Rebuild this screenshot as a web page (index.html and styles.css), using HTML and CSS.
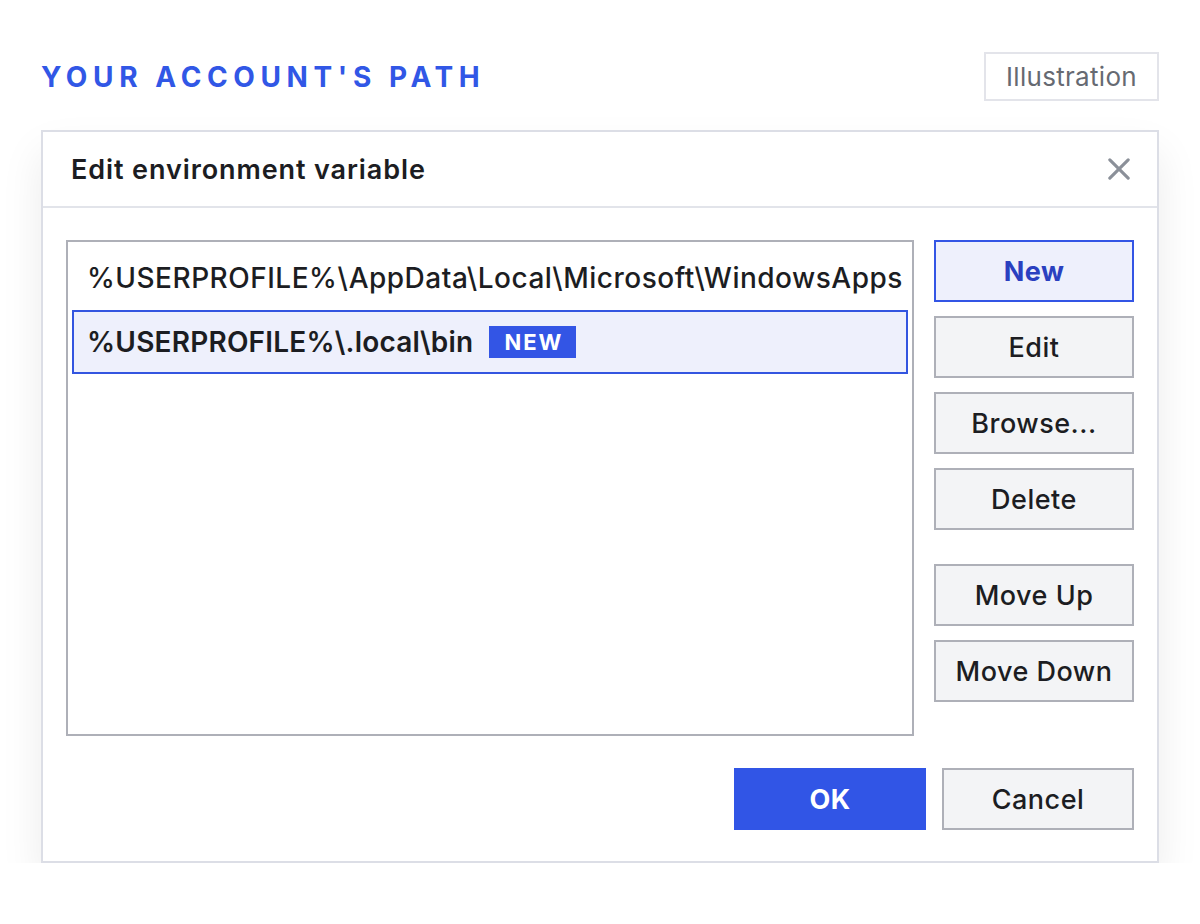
FILE: index.html
```html
<!DOCTYPE html>
<html lang="en">
<head>
    <meta charset="UTF-8">
    <title>Your account's path</title>
    <link rel="stylesheet" href="styles.css">
</head>
<body>
    <main class="page">
        <div class="topline">
            <h2 class="eyebrow">YOUR ACCOUNT'S PATH</h2>
            <span class="tag">Illustration</span>
        </div>

        <div class="dialog">
            <div class="dialogHead">
                <span class="dialogTitle">Edit environment variable</span>
                <svg class="close" width="24" height="24" viewBox="0 0 24 24">
                    <path d="M2 2 L22 22 M22 2 L2 22" stroke="#8b9099" stroke-width="3.4" stroke-linecap="round"/>
                </svg>
            </div>

            <div class="dialogBody">
                <div class="list">
                    <div class="item">%USERPROFILE%\AppData\Local\Microsoft\WindowsApps</div>
                    <div class="item selected">%USERPROFILE%\.local\bin <span class="badge">NEW</span></div>
                </div>
                <div class="sideButtons">
                    <button class="btn primarySoft">New</button>
                    <button class="btn">Edit</button>
                    <button class="btn">Browse...</button>
                    <button class="btn">Delete</button>
                    <button class="btn spaced">Move Up</button>
                    <button class="btn">Move Down</button>
                </div>
            </div>

            <div class="dialogFoot">
                <button class="btn ok">OK</button>
                <button class="btn cancel">Cancel</button>
            </div>
        </div>
    </main>
</body>
</html>
```

FILE: styles.css
```css
*{
    margin: 0;
    box-sizing: border-box;
}
body{
    background-color: #fff;
    font-family: Inter, "Noto Sans", sans-serif;
    color: #1c1d22;
}
.page{
    padding: 52px 41px 0 41px;
}
.topline{
    display: flex;
    justify-content: space-between;
    align-items: center;
    height: 49px;
    margin-bottom: 29px;
}
.eyebrow{
    color: #3157e6;
    font-size: 28px;
    font-weight: 700;
    letter-spacing: 5.6px;
}
.tag{
    border: 2px solid #e3e4ea;
    height: 49px;
    width: 175px;
    display: flex;
    align-items: center;
    justify-content: center;
    font-size: 26px;
    letter-spacing: 0.3px;
    color: #666a72;
}
.dialog{
    border: 2px solid #dcdee6;
    background-color: #fff;
    box-shadow: 0 22px 40px rgba(0, 0, 0, 0.08);
}
.dialogHead{
    height: 76px;
    border-bottom: 2px solid #e2e4ea;
    display: flex;
    align-items: center;
    justify-content: space-between;
    padding: 0 27px 0 28px;
}
.dialogTitle{
    font-size: 27px;
    font-weight: 600;
    letter-spacing: 0.9px;
}
.close{
    display: block;
    width: 22px;
    height: 22px;
}
.dialogBody{
    display: flex;
    gap: 20px;
    padding: 32px 23px 0 23px;
}
.list{
    width: 848px;
    height: 496px;
    border: 2px solid #aeb0b8;
    padding: 4px 4px;
}
.item{
    height: 64px;
    display: flex;
    align-items: center;
    padding: 0 13px;
    font-size: 28px;
    font-weight: 500;
    letter-spacing: 0.5px;
    white-space: nowrap;
    border: 2px solid transparent;
}
.item.selected{
    background-color: #eef0fc;
    border-color: #3355e0;
    font-weight: 600;
    letter-spacing: 0.2px;
}
.badge{
    background-color: #3355e5;
    color: #fff;
    font-size: 22px;
    font-weight: 700;
    letter-spacing: 2px;
    padding: 0 13px 0 15px;
    height: 32px;
    display: inline-flex;
    align-items: center;
    margin-left: 16px;
}
.sideButtons{
    display: flex;
    flex-direction: column;
    gap: 14px;
}
.btn{
    width: 200px;
    height: 62px;
    border: 2px solid #aeb0b8;
    background-color: #f3f4f6;
    font-family: Inter, "Noto Sans", sans-serif;
    font-size: 27px;
    font-weight: 500;
    letter-spacing: 0.5px;
    color: #1c1d22;
    padding: 0;
}
.btn.spaced{
    margin-top: 20px;
}
.btn.primarySoft{
    background-color: #eef0fc;
    border-color: #3355e5;
    color: #2a40c0;
    font-weight: 700;
}
.dialogFoot{
    display: flex;
    justify-content: flex-end;
    gap: 16px;
    padding: 32px 23px 31px 23px;
}
.btn.ok{
    width: 192px;
    background-color: #3155e6;
    border-color: #3155e6;
    color: #fff;
    font-weight: 700;
}
.btn.cancel{
    width: 192px;
}
```
